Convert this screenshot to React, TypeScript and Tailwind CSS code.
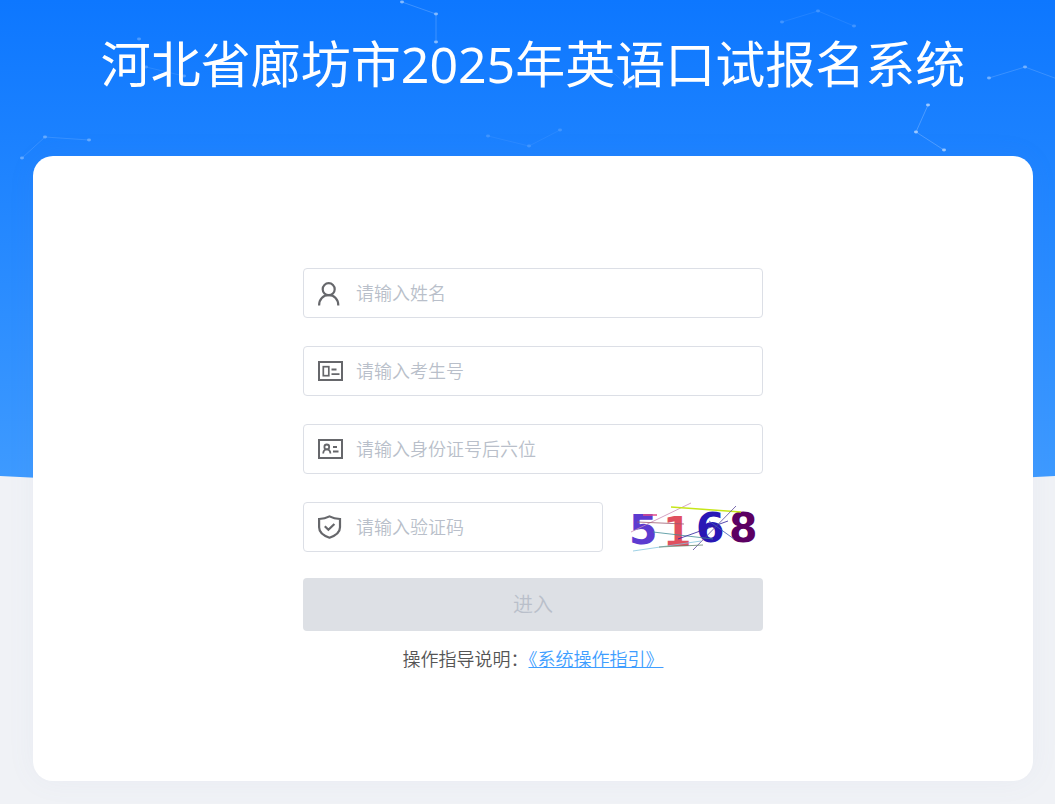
import React, { useState } from 'react';

interface Field {
  id: string;
  label: string;
  icon: React.ReactNode;
}

const UserIcon = () => (
  <svg width="22" height="26" viewBox="0 0 22 26" fill="none" stroke="#66676b" strokeWidth="2.2">
    <circle cx="10.7" cy="9.2" r="6" />
    <path d="M1.1 25.4c0-6.400 4-10.200 9.600-10.200s9.600 3.800 9.600 10.200" />
  </svg>
);

const TicketIcon = () => (
  <svg width="26" height="20" viewBox="0 0 26 20" fill="none" stroke="#66676b" strokeWidth="2">
    <rect x="1" y="1" width="23" height="18" />
    <rect x="5.3" y="5.7" width="5.5" height="9" strokeWidth="1.7" />
    <path d="M13.5 8.5h5M13.5 13.2h8" strokeWidth="1.8" />
  </svg>
);

const IdCardIcon = () => (
  <svg width="26" height="20" viewBox="0 0 26 20" fill="none" stroke="#66676b" strokeWidth="2">
    <rect x="1" y="1" width="23" height="18" />
    <circle cx="8.8" cy="7.9" r="2.4" strokeWidth="1.8" />
    <path d="M5.2 14.5c.2-2.6 1.5-4.1 3.6-4.1s3.4 1.5 3.6 4.1" strokeWidth="1.8" />
    <path d="M15 8h4M15 12.5h5.5" strokeWidth="2" />
  </svg>
);

const ShieldIcon = () => (
  <svg width="24" height="24" viewBox="0 0 24 24" fill="none" stroke="#66676b" strokeWidth="2.2">
    <path d="M11.5 1.4C14.500 3 17.700 3.900 22 4v8.300c0 4.700-4.200 8.300-10.500 10.400C5.200 20.600 1.100 17 1.100 12.300V4C5.300 3.900 8.500 3 11.500 1.400z" />
    <path d="M6.800 11.300l3.600 3.500 6-5.800" />
  </svg>
);

const fields: Field[] = [
  { id: 'name', label: '请输入姓名', icon: <UserIcon /> },
  { id: 'candidate-no', label: '请输入考生号', icon: <TicketIcon /> },
  { id: 'id-card', label: '请输入身份证号后六位', icon: <IdCardIcon /> },
];

const clusters = [
  { points: [[22, 158], [45, 137], [89, 140]], opacity: 0.4 },
  { points: [[402, 2], [436, 14], [436, 42]], opacity: 0.6 },
  { points: [[139, 39]], opacity: 0.3 },
  { points: [[146, 67], [184, 76]], opacity: 0.3 },
  { points: [[488, 136], [529, 146], [560, 130]], opacity: 0.2 },
  { points: [[610, 70], [630, 87]], opacity: 0.25 },
  { points: [[782, 22], [818, 11], [854, 26]], opacity: 0.25 },
  { points: [[989, 78], [1025, 67], [1060, 80]], opacity: 0.5 },
  { points: [[928, 105], [916, 132], [944, 150]], opacity: 0.7 },
];

function Backdrop() {
  return (
    <svg
      aria-hidden="true"
      className="absolute inset-x-0 top-0 w-full h-[490px]"
      viewBox="0 0 1055 490"
      preserveAspectRatio="none"
    >
      <defs>
        <linearGradient id="sky" x1="0" y1="0" x2="0" y2="1">
          <stop offset="0" stopColor="#0d77ff" />
          <stop offset="1" stopColor="#3f9bff" />
        </linearGradient>
      </defs>
      <path d="M0 0H1055V476Q527 506 0 476Z" fill="url(#sky)" />
      {clusters.map((cluster, i) => (
        <g key={i} opacity={cluster.opacity}>
          <polyline
            points={cluster.points.map((p) => p.join(',')).join(' ')}
            fill="none"
            stroke="#a9d0ff"
            strokeOpacity="0.5"
          />
          {cluster.points.map(([x, y]) => (
            <ellipse key={`${x}-${y}`} cx={x} cy={y} rx="2" ry="1.4" fill="#d3e7ff" />
          ))}
        </g>
      ))}
    </svg>
  );
}

function Captcha() {
  return (
    <svg width="134" height="54" viewBox="0 0 134 54" fill="none" className="overflow-visible">
      <g className="font-['DejaVu_Sans'] text-[41px] font-bold">
        <text x="2" y="42" fill="#5c3bd0">5</text>
        <text x="36" y="44" fill="#e0505f">1</text>
        <text x="69" y="40" fill="#2917b5">6</text>
        <text x="102" y="40" fill="#5c0062">8</text>
      </g>
      <g strokeWidth="0.8">
        <path d="M4 30L64 1" stroke="#c98bb5" />
        <path d="M44 5L114 10" stroke="#c6e619" strokeWidth="1.5" />
        <path d="M16 13H30" stroke="#e04a8a" strokeWidth="1.5" />
        <path d="M10 20L57 22" stroke="#9c5b70" />
        <path d="M26 30L86 37" stroke="#438d96" />
        <path d="M51 37L101 19" stroke="#2d1d9c" />
        <path d="M66 48L109 4" stroke="#57469b" />
        <path d="M82 19L107 37" stroke="#3f5cb5" />
        <path d="M6 49L74 39" stroke="#85c5de" />
        <path d="M32 45L76 43" stroke="#65856d" />
      </g>
    </svg>
  );
}

function TextField({ id, label, icon }: Field) {
  return (
    <div className="flex items-center h-[50px] w-full rounded border border-[#dcdfe6] bg-white pl-3.5">
      <label htmlFor={id} aria-label={label} className="w-[38px] shrink-0">
        {icon}
      </label>
      <input
        id={id}
        name={id}
        type="text"
        placeholder={label}
        className="min-w-0 flex-1 h-full bg-transparent text-lg font-[350] text-[#606266] placeholder:text-[#b9bfca] outline-none"
      />
    </div>
  );
}

export default function App() {
  const [year] = useState(2025);

  return (
    <div className="relative min-h-screen bg-[#f0f2f6] pl-[33px] pr-[22px] pb-[23px] font-['Noto_Sans','Noto_Sans_CJK_SC',sans-serif]">
      <Backdrop />

      <div className="relative mx-auto max-w-[1000px]">
        {/* Title */}
        <header className="h-[156px] pt-7">
          <h1 className="text-center text-[50px] leading-[72px] text-white whitespace-nowrap">
            河北省廊坊市{year}年英语口试报名系统
          </h1>
        </header>

        {/* Login card */}
        <main className="rounded-[20px] bg-white px-6 pt-28 pb-[108px] shadow-[0_0_30px_rgba(120,140,180,0.06)]">
          <form className="mx-auto max-w-[460px]" onSubmit={(e) => e.preventDefault()}>
            <div className="flex flex-col gap-7">
              {fields.map((field) => (
                <TextField key={field.id} {...field} />
              ))}
              <div className="flex h-[50px] items-start justify-between">
                <div className="w-[300px]">
                  <TextField id="captcha" label="请输入验证码" icon={<ShieldIcon />} />
                </div>
                <button type="button" aria-label="刷新验证码" className="mr-0.5">
                  <Captcha />
                </button>
              </div>
            </div>

            <button
              type="submit"
              disabled
              className="mt-[26px] h-[53px] w-full rounded bg-[#dde0e5] text-xl font-[350] text-[#b9bfca]"
            >
              进入
            </button>

            <p className="mt-3.5 text-center text-lg font-[350] text-[#555]">
              操作指导说明：
              <a href="#guide" className="text-[#409eff] underline">
                《系统操作指引》
              </a>
            </p>
          </form>
        </main>
      </div>
    </div>
  );
}
